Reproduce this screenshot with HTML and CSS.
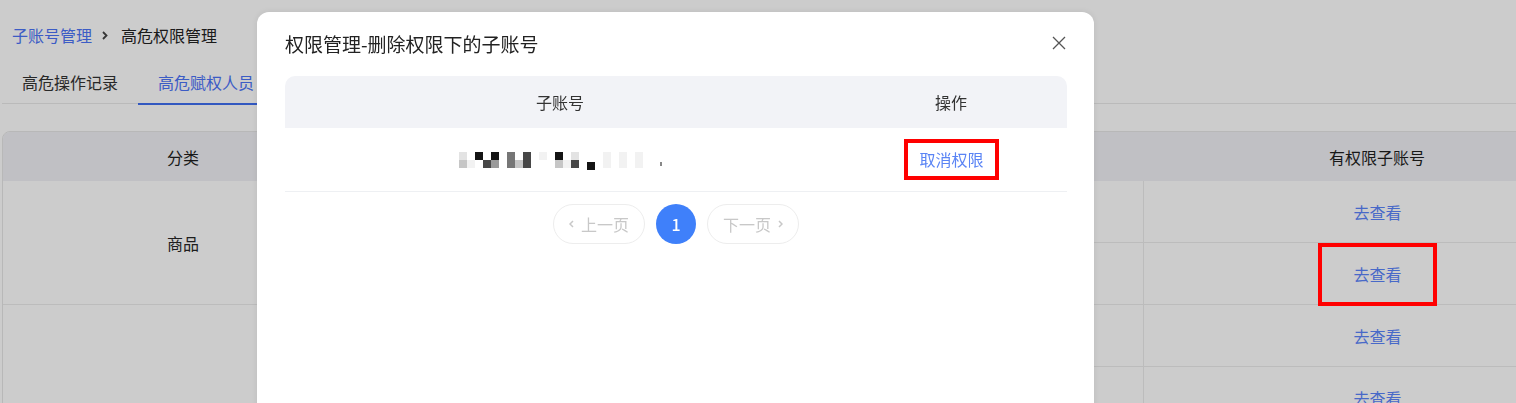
FILE: index.html
```html
<!DOCTYPE html>
<html lang="zh-CN">
<head>
<meta charset="utf-8">
<title>高危权限管理</title>
<link rel="stylesheet" href="styles.css">
</head>
<body>
<div class="page">
  <div class="crumbs">
    <a class="crumb-link">子账号管理</a>
    <svg class="crumb-sep" width="6" height="9" viewBox="0 0 6 9"><path d="M1 1l3.5 3.5L1 8" fill="none" stroke="#444" stroke-width="1.8"/></svg>
    <span class="crumb-current">高危权限管理</span>
  </div>
  <div class="tabs">
    <div class="tab">高危操作记录</div>
    <div class="tab active">高危赋权人员</div>
  </div>
  <table class="grid">
    <colgroup><col class="c-cat"><col class="c-mid"><col class="c-mid"><col class="c-acc"></colgroup>
    <thead>
      <tr><th>分类</th><th></th><th></th><th>有权限子账号</th></tr>
    </thead>
    <tbody>
      <tr><td rowspan="2" class="cat">商品</td><td></td><td></td><td class="acc"><a class="link">去查看</a></td></tr>
      <tr><td></td><td></td><td class="acc"><a class="link">去查看</a></td></tr>
      <tr><td rowspan="2" class="cat"></td><td></td><td></td><td class="acc"><a class="link">去查看</a></td></tr>
      <tr><td></td><td></td><td class="acc"><a class="link">去查看</a></td></tr>
    </tbody>
  </table>
</div>

<div class="mask"></div>

<div class="dialog">
  <div class="dialog-head">
    <div class="dialog-title">权限管理-删除权限下的子账号</div>
    <svg class="dialog-close" width="14" height="14" viewBox="0 0 14 14"><path d="M1 1l12 12M13 1L1 13" stroke="#555" stroke-width="1.3" fill="none"/></svg>
  </div>
  <div class="sub">
    <div class="sub-head">
      <div>子账号</div>
      <div>操作</div>
    </div>
    <div class="sub-row">
      <div class="mosaic">
        <i class="s2"></i><i></i><i class="s7"></i><i></i><i class="s7"></i><i></i><i class="s5"></i><i></i><i class="s6"></i><i></i><i class="s1"></i><i></i><i class="s7"></i><i></i><i class="s2"></i><i></i><i></i><i></i><i class="s1"></i><i></i><i class="s1"></i><i></i><i class="s1"></i><i></i><i></i><i></i>
        <i class="s3"></i><i class="s1"></i><i></i><i class="s6"></i><i class="s4"></i><i></i><i class="s5"></i><i class="s3"></i><i class="s6"></i><i></i><i></i><i></i><i class="s3"></i><i class="s1"></i><i class="s6"></i><i></i><i class="s7 low"></i><i></i><i class="s1"></i><i></i><i class="s1"></i><i></i><i class="s1"></i><i></i><i></i><i class="tick"></i>
      </div>
      <div><a class="revoke">取消权限</a></div>
    </div>
    <div class="pager">
      <div class="pg">
        <svg width="5" height="8" viewBox="0 0 5 8"><path d="M4 1L1 4l3 3" fill="none" stroke="#c8c8c8" stroke-width="1.5"/></svg>
        <span>上一页</span>
      </div>
      <div class="pg-num">1</div>
      <div class="pg">
        <span>下一页</span>
        <svg width="5" height="8" viewBox="0 0 5 8"><path d="M1 1l3 3-3 3" fill="none" stroke="#c8c8c8" stroke-width="1.5"/></svg>
      </div>
    </div>
  </div>
</div>

<div class="mark-view"></div>
</body>
</html>
```

FILE: styles.css
```css
html, body {
  margin: 0;
  overflow: hidden;
  background: #fff;
}

body {
  font-family: "Noto Sans CJK SC", "Noto Sans", sans-serif;
  font-size: 16px;
  color: #262626;
  width: 1516px;
  height: 403px;
}

.page {
  padding-left: 2px;
}

/* breadcrumb */
.crumbs {
  display: flex;
  align-items: center;
  padding: 23px 0 13px 10px;
  line-height: 24px;
}

.crumb-link {
  color: #4c73f7;
}

.crumb-sep {
  margin: 0 13px 0 10px;
}

.crumb-current {
  color: #222;
}

/* tabs */
.tabs {
  display: flex;
  border-bottom: 1px solid #e9e9e9;
}

.tab {
  position: relative;
  padding: 10px 20px 9px;
  line-height: 24px;
  color: #333;
}

.tab.active {
  color: #4c73f7;
}

.tab.active::after {
  content: "";
  position: absolute;
  left: 0;
  right: 0;
  bottom: -2px;
  height: 2px;
  background: #3f6ef0;
}

/* main table */
.grid {
  margin-top: 27px;
  width: 1608px;
  table-layout: fixed;
  border-collapse: separate;
  border-spacing: 0;
  border: 1px solid #e6e6e6;
  border-radius: 8px 8px 0 0;
  overflow: hidden;
}

.c-cat { width: 360px; }
.c-mid { width: 390px; }
.c-acc { width: 468px; }

.grid th {
  height: 49px;
  padding: 0;
  background: #f0f1f5;
  font-weight: normal;
  color: #1f1f1f;
  text-align: center;
}

.grid td {
  height: 61px;
  padding: 0;
  text-align: center;
  border-bottom: 1px solid #ececec;
}

.grid td.acc {
  border-left: 1px solid #ececec;
}

.link {
  color: #5a84fb;
}

/* dimmed backdrop */
.mask {
  position: fixed;
  inset: 0;
  background: rgba(0, 0, 0, 0.2);
  z-index: 10;
}

/* dialog */
.dialog {
  position: absolute;
  left: 257px;
  top: 12px;
  width: 837px;
  height: 480px;
  box-sizing: border-box;
  padding: 0 27px 0 28px;
  background: #fff;
  border-radius: 12px;
  box-shadow: 0 0 6px rgba(0, 0, 0, 0.08);
  z-index: 20;
}

.dialog-head {
  display: flex;
  align-items: center;
  justify-content: space-between;
  height: 64px;
}

.dialog-title {
  font-size: 19px;
  color: #222;
  line-height: 28px;
}

.dialog-close {
  margin: -2px 1px 0 0;
}

.sub-head,
.sub-row {
  display: grid;
  grid-template-columns: 550px 232px;
  align-items: center;
  text-align: center;
}

.sub-head {
  height: 52px;
  background: #f2f3f7;
  border-radius: 10px 10px 0 0;
  color: #333;
}

.sub-row {
  height: 63px;
  border-bottom: 1px solid #eef0f3;
}

/* masked account name */
.mosaic {
  display: grid;
  grid-template-columns: repeat(26, 8px);
  grid-template-rows: 8px 8px;
  justify-content: center;
  padding-left: 6px;
}

.mosaic i { display: block; }
.mosaic .s1 { background: #f2f2f2; }
.mosaic .s2 { background: #e3e3e3; }
.mosaic .s3 { background: #c6c6c6; }
.mosaic .s4 { background: #9a9a9a; }
.mosaic .s5 { background: #767676; }
.mosaic .s6 { background: #474747; }
.mosaic .s7 { background: #141414; }
.mosaic .low { transform: translateY(2px); }
.mosaic .tick {
  width: 2px;
  height: 4px;
  margin: 2px 0 0 1px;
  background: #888;
}

.revoke {
  display: inline-block;
  border: 4px solid #ff0000;
  padding: 0 11px;
  line-height: 33px;
  color: #5a84f5;
  margin-left: 1px;
}

/* pagination */
.pager {
  display: flex;
  justify-content: center;
  gap: 11px;
  margin-top: 12px;
}

.pg {
  display: flex;
  align-items: center;
  justify-content: center;
  gap: 7px;
  width: 92px;
  height: 40px;
  box-sizing: border-box;
  border: 1px solid #ededed;
  border-radius: 20px;
  color: #c8c8c8;
}

.pg-num {
  width: 40px;
  height: 40px;
  border-radius: 50%;
  background: #3f80fa;
  color: #fff;
  font-weight: 500;
  display: flex;
  align-items: center;
  justify-content: center;
}

/* highlight frame over the second view link */
.mark-view {
  position: absolute;
  left: 1318px;
  top: 243px;
  width: 119px;
  height: 63px;
  box-sizing: border-box;
  border: 4px solid #ff0000;
  z-index: 30;
}
```
